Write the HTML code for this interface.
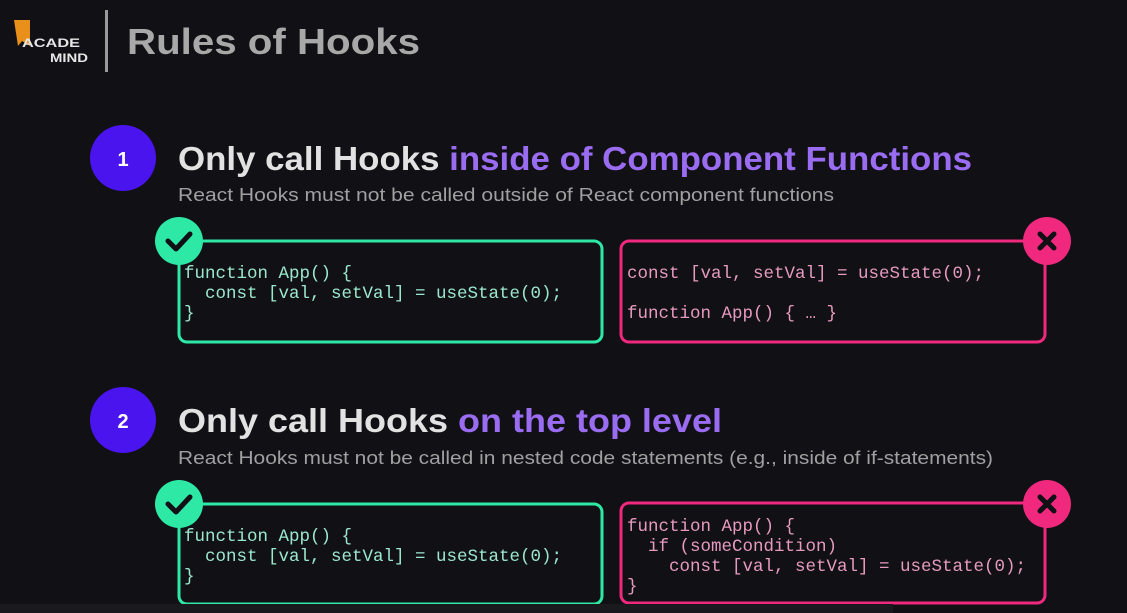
<!DOCTYPE html>
<html><head><meta charset="utf-8"><style>
html,body{margin:0;padding:0;background:#111015;width:1127px;height:613px;overflow:hidden}
svg{display:block}
.code text{white-space:pre}
</style></head><body>
<svg width="1127" height="613" viewBox="0 0 1127 613" xmlns="http://www.w3.org/2000/svg">
<rect width="1127" height="613" fill="#111015"/>
<!-- logo -->
<path d="M14 20 L30 20 L30 46 L22 41 L18 46 Z" fill="#e8901a"/>
<text x="22" y="47" font-family="Liberation Sans, sans-serif" font-weight="bold" font-size="12" fill="#e6e6e6" textLength="58" lengthAdjust="spacingAndGlyphs">ACADE</text>
<text x="50" y="62" font-family="Liberation Sans, sans-serif" font-weight="bold" font-size="12" fill="#e6e6e6" textLength="38" lengthAdjust="spacingAndGlyphs">MIND</text>
<rect x="105" y="10" width="3" height="62" fill="#9a9a9a"/>
<text x="127" y="54" font-family="Liberation Sans, sans-serif" font-weight="bold" font-size="36" fill="#a8a8a8" textLength="293" lengthAdjust="spacingAndGlyphs">Rules of Hooks</text>

<g font-family="Liberation Sans, sans-serif">
<circle cx="123" cy="158" r="33" fill="#4a14ee"/>
<text x="123" y="166" text-anchor="middle" font-weight="bold" font-size="20" fill="#fff">1</text>
<text x="178" y="170" font-weight="bold" font-size="33" fill="#e2e2e2" textLength="794" lengthAdjust="spacingAndGlyphs">Only call Hooks <tspan fill="#9a6cf2">inside of Component Functions</tspan></text>
<text x="178" y="201" font-size="18" fill="#a0a0a0" textLength="656" lengthAdjust="spacingAndGlyphs">React Hooks must not be called outside of React component functions</text>

<circle cx="123" cy="420" r="33" fill="#4a14ee"/>
<text x="123" y="428" text-anchor="middle" font-weight="bold" font-size="20" fill="#fff">2</text>
<text x="178" y="432" font-weight="bold" font-size="33" fill="#e2e2e2" textLength="544" lengthAdjust="spacingAndGlyphs">Only call Hooks <tspan fill="#9a6cf2">on the top level</tspan></text>
<text x="178" y="464" font-size="18" fill="#a0a0a0" textLength="815" lengthAdjust="spacingAndGlyphs">React Hooks must not be called in nested code statements (e.g., inside of if-statements)</text>
</g>

<!-- boxes -->
<g fill="none" stroke-width="3">
<rect x="179" y="241" width="423" height="101" rx="8" stroke="#2ee8a6"/>
<rect x="621" y="241" width="424" height="101" rx="8" stroke="#f0287e"/>
<rect x="179" y="504" width="423" height="100" rx="8" stroke="#2ee8a6"/>
<rect x="621" y="503" width="424" height="100" rx="8" stroke="#f0287e"/>
</g>
<g>
<circle cx="179" cy="241" r="24" fill="#2ee8a6"/>
<path d="M168 241 L176 249 L190 234" stroke="#111015" stroke-width="5" fill="none" stroke-linecap="round" stroke-linejoin="round"/>
<circle cx="179" cy="504" r="24" fill="#2ee8a6"/>
<path d="M168 504 L176 512 L190 497" stroke="#111015" stroke-width="5" fill="none" stroke-linecap="round" stroke-linejoin="round"/>
<circle cx="1047" cy="241" r="24" fill="#f0287e"/>
<path d="M1040 234 L1054 248 M1054 234 L1040 248" stroke="#111015" stroke-width="5" stroke-linecap="round"/>
<circle cx="1047" cy="504" r="24" fill="#f0287e"/>
<path d="M1040 497 L1054 511 M1054 497 L1040 511" stroke="#111015" stroke-width="5" stroke-linecap="round"/>
</g>

<g class="code" font-family="Liberation Mono, monospace" font-size="17.5">
<g fill="#9ae8cc">
<text x="184" y="278">function App() {</text>
<text x="205" y="298">const [val, setVal] = useState(0);</text>
<text x="184" y="318">}</text>
<text x="184" y="541">function App() {</text>
<text x="205" y="561">const [val, setVal] = useState(0);</text>
<text x="184" y="581">}</text>
</g>
<g fill="#e79ac0">
<text x="627" y="278">const [val, setVal] = useState(0);</text>
<text x="627" y="318">function App() { … }</text>
<text x="627" y="531">function App() {</text>
<text x="648" y="551">if (someCondition)</text>
<text x="669" y="571">const [val, setVal] = useState(0);</text>
<text x="627" y="591">}</text>
</g>
</g>
<rect x="0" y="604" width="893" height="9" fill="#1a1a1e"/>
</svg>
</body></html>
